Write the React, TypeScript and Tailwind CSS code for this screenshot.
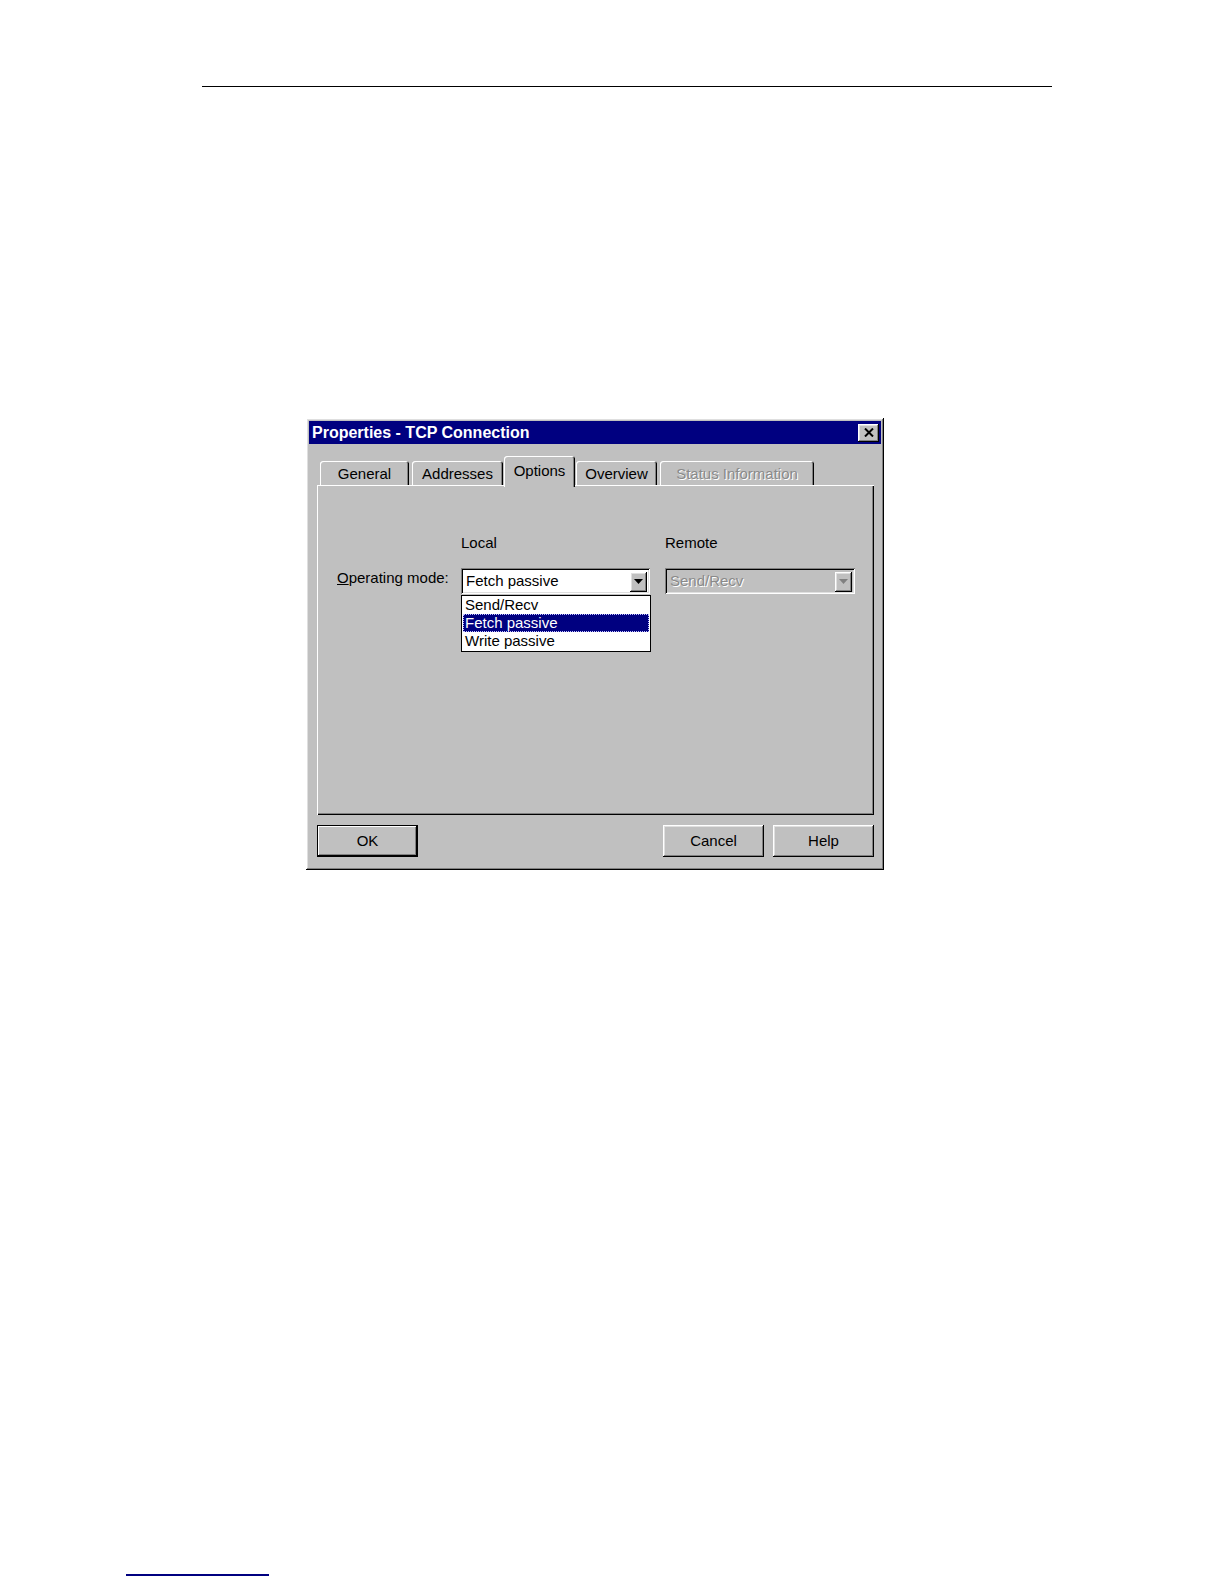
const raised =
  "shadow-[inset_-1px_-1px_#000,inset_1px_1px_#fff,inset_-2px_-2px_#808080,inset_2px_2px_#dfdfdf]"
const sunken =
  "shadow-[inset_1px_1px_#808080,inset_-1px_-1px_#fff,inset_2px_2px_#000,inset_-2px_-2px_#dfdfdf]"
const font = "font-['Liberation_Sans',Arial,sans-serif]"

const Arrow = ({ disabled }: { disabled?: boolean }) => (
  <div className={`w-[17px] h-[20px] bg-[#c0c0c0] flex items-center justify-center ${raised}`}>
    <svg width="9" height="5" viewBox="0 0 9 5">
      <path d="M0 0h9L4.5 5z" fill={disabled ? "#808080" : "#000"} />
    </svg>
  </div>
)

const Tab = ({ label, w, selected, disabled }: { label: string; w: string; selected?: boolean; disabled?: boolean }) => (
  <div
    className={`${w} ${
      selected ? "h-[31px] -mb-[2px] -mx-[2px] z-10 pb-[1px]" : "h-[24px] pt-[2px]"
    } bg-[#c0c0c0] rounded-t-[3px] flex items-center justify-center text-[15px] shadow-[inset_1px_1px_#fff,inset_-1px_0_#000,inset_-2px_0_#808080] ${
      disabled ? "text-[#8a8a8a] [text-shadow:1px_1px_#fff]" : "text-black"
    }`}
  >
    {label}
  </div>
)

const Button = ({ label, def }: { label: string; def?: boolean }) => (
  <div
    className={`w-[101px] h-[32px] bg-[#c0c0c0] flex items-center justify-center text-[15px] text-black ${
      def
        ? "shadow-[inset_-1px_-1px_#000,inset_1px_1px_#000,inset_-2px_-2px_#000,inset_2px_2px_#fff,inset_-3px_-3px_#808080]"
        : raised
    }`}
  >
    {label}
  </div>
)

export default function App() {
  return (
    <div className={`w-[1224px] h-[1584px] bg-white overflow-hidden flex flex-col ${font}`}>
      <div className="mt-[86px] ml-[202px] w-[850px] h-[1px] bg-black" />

      <div className={`mt-[331px] ml-[306px] w-[578px] h-[452px] bg-[#c0c0c0] p-[3px] flex flex-col ${raised}`}>
        <div className="h-[23px] bg-[#000080] flex items-center justify-between pl-[3px] pr-[2px]">
          <span className="text-white font-bold text-[16px]">Properties - TCP Connection</span>
          <div className={`w-[21px] h-[18px] bg-[#c0c0c0] flex items-center justify-center ${raised}`}>
            <svg width="10" height="9" viewBox="0 0 10 9">
              <path d="M1 0.5l8 8M9 0.5l-8 8" stroke="#000" strokeWidth="2" />
            </svg>
          </div>
        </div>

        <div className="flex flex-col pl-[8px]">
          <div className="mt-[12px] h-[29px] flex items-end gap-[3px] pl-[3px] relative">
            <Tab label="General" w="w-[89px]" />
            <Tab label="Addresses" w="w-[91px]" />
            <Tab label="Options" w="w-[71px]" selected />
            <Tab label="Overview" w="w-[81px]" />
            <Tab label="Status Information" w="w-[154px]" disabled />
          </div>

          <div className="h-[330px] w-[557px] flex text-[15px] text-black shadow-[inset_1px_1px_#fff,inset_-1px_-1px_#000,inset_-2px_-2px_#808080]">
            <div className="w-[144px] pl-[20px] pt-[82px]">
              <span className="leading-[18px]">
                <span className="underline">O</span>perating mode:
              </span>
            </div>
            <div className="w-[204px] pt-[49px] flex flex-col">
              <div className="leading-[18px]">Local</div>
              <div className="relative mt-[16px]">
                <div className={`w-[189px] h-[26px] bg-white flex items-center justify-between pl-[5px] pr-[3px] pt-[1px] ${sunken}`}>
                  <span>Fetch passive</span>
                  <Arrow />
                </div>
                <div className="absolute left-0 top-[27px] w-[190px] border border-black bg-white flex flex-col leading-[18px] pb-[1px]">
                  <div className="pl-[3px]">Send/Recv</div>
                  <div className="pl-[2px] mx-[1px] bg-[#000080] text-white outline outline-1 outline-dotted outline-[#c0c0ff] -outline-offset-1">
                    Fetch passive
                  </div>
                  <div className="pl-[3px]">Write passive</div>
                </div>
              </div>
            </div>
            <div className="w-[190px] pt-[49px] flex flex-col">
              <div className="leading-[18px]">Remote</div>
              <div className={`mt-[16px] w-[190px] h-[26px] bg-[#c0c0c0] flex items-center justify-between pl-[5px] pr-[3px] pt-[1px] ${sunken}`}>
                <span className="text-[#8a8a8a] [text-shadow:1px_1px_#fff]">Send/Recv</span>
                <Arrow disabled />
              </div>
            </div>
          </div>

          <div className="mt-[10px] w-[557px] flex items-center">
            <Button label="OK" def />
            <div className="ml-auto flex gap-[9px]">
              <Button label="Cancel" />
              <Button label="Help" />
            </div>
          </div>
        </div>
      </div>

      <div className="mt-[704px] ml-[126px] w-[143px] h-[2px] bg-[#000080]" />
    </div>
  )
}
